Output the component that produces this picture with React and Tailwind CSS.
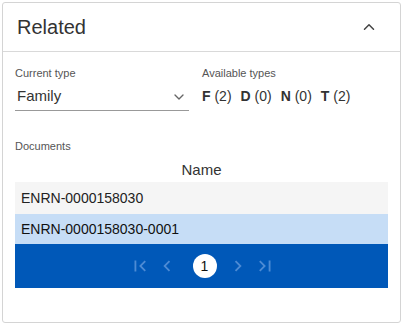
import React from "react";
import { MdFirstPage, MdChevronLeft, MdChevronRight, MdLastPage } from "react-icons/md";
import { ChevronUp, ChevronDown } from "lucide-react";

export default function App() {
  return (
    <div className="w-[403px] h-[325px] bg-white pt-[2px] pl-[2px]" style={{ fontFamily: '"Liberation Sans", Arial, sans-serif' }}>
      <div className="w-[399px] h-[321px] border border-[#d4d4d4] rounded-[3px] flex flex-col">
        <div className="h-[49px] border-b border-[#d9d9d9] flex items-center justify-between pl-[14px] pr-[22px]">
          <span className="text-[20px] text-[#333]">Related</span>
          <ChevronUp size={18} strokeWidth={2} className="text-[#444]" />
        </div>
        <div className="px-[12px] pt-[14px] flex flex-col">
          <div className="flex gap-[13px]">
            <div className="w-[174px] flex flex-col">
              <span className="text-[11px] text-[#555] leading-[14px]">Current type</span>
              <div className="flex items-center justify-between h-[28px] mt-[3px] border-b border-[#999] pl-[2px] pr-[2px]">
                <span className="text-[15px] text-[#333]">Family</span>
                <ChevronDown size={16} strokeWidth={2} className="text-[#666]" />
              </div>
            </div>
            <div className="flex flex-col">
              <span className="text-[11px] text-[#555] leading-[14px]">Available types</span>
              <div className="flex gap-[9px] mt-[6px] text-[14px] text-[#333]">
                <span><b>F</b> (2)</span>
                <span><b>D</b> (0)</span>
                <span><b>N</b> (0)</span>
                <span><b>T</b> (2)</span>
              </div>
            </div>
          </div>
          <span className="text-[11px] text-[#555] leading-[14px] mt-[28px]">Documents</span>
          <div className="text-center text-[15px] text-[#333] h-[27px] leading-[29px] mt-[2px]">Name</div>
          <div className="h-[32px] bg-[#f5f5f5] flex items-center pl-[6px] text-[14px] text-[#222]">ENRN-0000158030</div>
          <div className="h-[30px] bg-[#c6ddf6] flex items-center pl-[6px] text-[14px] text-[#111]">ENRN-0000158030-0001</div>
          <div className="h-[44px] bg-[#0058b8] flex items-center justify-center">
            <MdFirstPage size={22} className="text-[#4d8bd4] ml-[1px]" />
            <MdChevronLeft size={22} className="text-[#4d8bd4] ml-[5px]" />
            <div className="w-[24px] h-[24px] rounded-full bg-white flex items-center justify-center text-[14px] text-[#111] ml-[15px]">1</div>
            <MdChevronRight size={22} className="text-[#4d8bd4] ml-[10px]" />
            <MdLastPage size={22} className="text-[#4d8bd4] ml-[5px]" />
          </div>
        </div>
      </div>
    </div>
  );
}
